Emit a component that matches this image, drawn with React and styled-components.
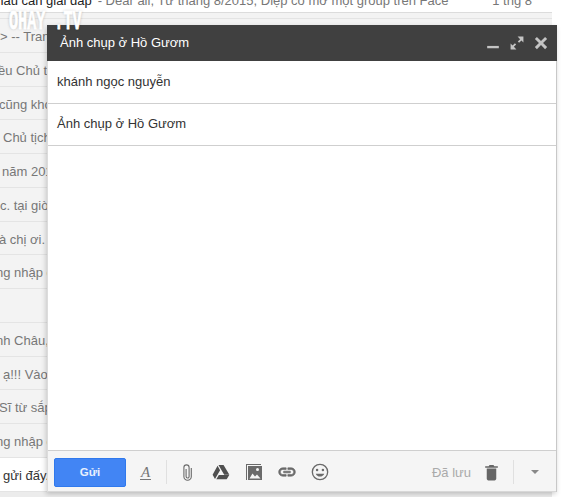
import React from "react";
import styled, { createGlobalStyle } from "styled-components";

const GlobalStyle = createGlobalStyle`
  html, body {
    margin: 0;
    padding: 0;
    background: #fff;
    font-family: "Liberation Sans", Arial, sans-serif;
  }
`;

const Page = styled.div`
  position: relative;
  width: 571px;
  height: 497px;
  overflow: hidden;
  background: #fff;
`;

const MailList = styled.div`
  width: 552px;
  height: 497px;
  overflow: hidden;
  display: flex;
  flex-direction: column;
  background: #ececec;
`;

const TopRow = styled.div`
  height: 19px;
  flex: none;
  box-sizing: border-box;
  background: linear-gradient(#fff 0 12px, #dcdcdc 12px 13px, #f3f3f3 13px);
  border-bottom: 1px solid #e4e4e4;
  overflow: hidden;
`;

const TopText = styled.div`
  display: flex;
  align-items: flex-end;
  height: 9px;
  padding-right: 20px;
  font-size: 13px;
  line-height: 16px;
  white-space: nowrap;
  color: #777;
  overflow: hidden;
`;

const Sender = styled.span`
  color: #222;
  margin-left: -11px;
  margin-right: 6px;
`;

const RowDate = styled.span`
  margin-left: auto;
`;

const Row = styled.div`
  height: 33.75px;
  flex: none;
  box-sizing: border-box;
  overflow: hidden;
  background: ${(p) => (p.$unread ? "#fff" : "#f3f3f3")};
  border-bottom: 1px solid #e4e4e4;
  text-indent: ${(p) => p.$left}px;
  font-size: 13px;
  line-height: 36px;
  white-space: nowrap;
  color: ${(p) => (p.$unread ? "#333" : "#777")};
`;

const Watermark = styled.div`
  position: absolute;
  left: 9px;
  top: 8px;
  font-family: "Liberation Mono", monospace;
  font-weight: bold;
  font-size: 27px;
  line-height: 28px;
  white-space: pre;
  color: #fff;
  -webkit-text-stroke: 0.8px #fff;
  text-shadow: 0 0 4px rgba(0, 0, 0, 0.28);
  transform: scaleX(0.56);
  transform-origin: left top;
`;

const Compose = styled.section`
  position: absolute;
  left: 47px;
  top: 25px;
  width: 510px;
  height: 467px;
  box-sizing: border-box;
  display: flex;
  flex-direction: column;
  background: #fff;
  border-left: 1px solid #dcdcdc;
  border-right: 1px solid #c8c8c8;
  box-shadow: -1px 2px 5px rgba(0, 0, 0, 0.2);
`;

const Header = styled.header`
  height: 36px;
  flex: none;
  display: flex;
  align-items: center;
  padding: 0 9px 0 13px;
  margin: 0 -1px;
  background: #404040;
`;

const Title = styled.div`
  flex: 1;
  padding-bottom: 2px;
  font-size: 13px;
  color: #fff;
`;

const HeaderIcons = styled.div`
  display: flex;
  align-items: center;
  gap: 10px;
  color: #c4c4c4;
`;

const Field = styled.div`
  height: ${(p) => p.$height}px;
  flex: none;
  box-sizing: border-box;
  display: flex;
  align-items: center;
  padding: 0 9px 2px;
  font-size: 13px;
  color: #333;
  border-bottom: 1px solid #cfcfcf;
`;

const Body = styled.div`
  flex: 1;
`;

const Footer = styled.footer`
  height: 42px;
  flex: none;
  box-sizing: border-box;
  display: flex;
  align-items: center;
  padding: 2px 17px 0 6px;
  background: #f5f5f5;
  border-top: 1px solid #cfcfcf;
  border-bottom: 1px solid #d8d8d8;
`;

const SendButton = styled.button`
  width: 72px;
  height: 29px;
  padding: 0;
  box-sizing: border-box;
  border: 1px solid #3079ed;
  border-radius: 2px;
  background: #4285f4;
  color: #e8f0fe;
  font-family: inherit;
  font-size: 11.5px;
  font-weight: bold;
`;

const FormatA = styled.span`
  width: 11px;
  margin-left: 14px;
  font-family: "Liberation Serif", serif;
  font-style: italic;
  font-size: 15px;
  line-height: 14px;
  text-align: center;
  color: #777;
  border-bottom: 1px solid #777;
`;

const Divider = styled.span`
  width: 1px;
  height: 24px;
  background: #e0e0e0;
  margin: ${(p) => p.$margin};
`;

const Tools = styled.div`
  display: grid;
  grid-template-columns: repeat(5, 33.1px);
  justify-items: center;
  align-items: center;
  color: #6a6a6a;
`;

const Trash = styled.div`
  display: flex;
  color: #666;
`;

const Saved = styled.span`
  margin-left: auto;
  margin-right: 11px;
  font-size: 13px;
  color: #aaa;
`;

const Caret = styled.span`
  width: 0;
  height: 0;
  border-left: 4px solid transparent;
  border-right: 4px solid transparent;
  border-top: 4px solid #888;
`;

const Icon = ({ size = 24, box = "0 0 24 24", children, ...rest }) => (
  <svg width={size} height={size} viewBox={box} fill="currentColor" {...rest}>
    {children}
  </svg>
);

const rows = [
  { left: 0, text: "> -- Trang nhất bạn có thể xem thêm" },
  { left: -2, text: "ều Chủ tịch và các bạn học sinh" },
  { left: -1, text: "cũng khó nói lắm với các bạn" },
  { left: 3, text: "Chủ tịch nước đã gửi thư chúc mừng" },
  { left: 2, text: "năm 2015 các bạn đã" },
  { left: 0, text: "c. tại giờ học hôm nay" },
  { left: -1, text: "à chị ơi. em hỏi" },
  { left: -4, text: "ng nhập để xem" },
  { left: 0, text: "" },
  { left: -4, text: "nh Châu, cảm ơn bạn" },
  { left: 3, text: "ạ!!! Vào đây đi nhé" },
  { left: -1, text: "Sĩ từ sắp về đây" },
  { left: -4, text: "ng nhập để xem" },
  { left: 3, text: "gửi đấy. Cảm ơn bạn", unread: true },
];

export default function App() {
  return (
    <>
      <GlobalStyle />
      <Page>
        <MailList>
          <TopRow>
            <TopText>
              <Sender>nhau cần giải đáp</Sender>
              - Dear all, Từ tháng 8/2015, Diệp có mở một group trên Face
              <RowDate>1 thg 8</RowDate>
            </TopText>
          </TopRow>
          {rows.map((r, i) => (
            <Row key={i} $left={r.left} $unread={r.unread}>
              {r.text}
            </Row>
          ))}
        </MailList>

        <Compose>
          <Header>
            <Title>Ảnh chụp ở Hồ Gươm</Title>
            <HeaderIcons>
              <Icon size={14}>
                <rect x="2" y="17" width="20" height="4" />
              </Icon>
              <Icon size={14}>
                <path d="M13 1h10v10l-3.4-3.4-4 4-2.2-2.2 4-4zM11 23H1V13l3.4 3.4 4-4 2.2 2.2-4 4z" />
              </Icon>
              <Icon size={14}>
                <path d="M19 1.5L22.5 5 15.5 12l7 7-3.5 3.5-7-7-7 7L1.5 19l7-7-7-7L5 1.5l7 7z" />
              </Icon>
            </HeaderIcons>
          </Header>

          <Field $height={43}>khánh ngọc nguyễn</Field>
          <Field $height={42}>Ảnh chụp ở Hồ Gươm</Field>
          <Body />

          <Footer>
            <SendButton>Gửi</SendButton>
            <FormatA>A</FormatA>
            <Divider $margin="0 4px 0 15px" />
            <Tools>
              <Icon size={17} box="0 0 10 17">
                <path
                  fill="none"
                  stroke="currentColor"
                  strokeWidth="1.1"
                  d="M3.6 5v7.5a1.5 1.5 0 0 0 3 0V3.5a2.6 2.6 0 0 0-5.2 0v9a3.7 3.7 0 0 0 7.4 0V4"
                />
              </Icon>
              <Icon size={18} color="#505050">
                <path d="M8.6 2.5h6.8l7.8 13.2h-6.9zM7.4 3.5l3.4 6-6.8 11.7L.8 15.8zM5.7 21.5l3.4-5.5H23l-3.4 5.5z" />
              </Icon>
              <Icon size={16} box="0 0 16 16">
                <path d="M0 0h15v1H1v15H0z" />
                <rect x="2" y="2" width="14" height="14" />
                <circle cx="11.5" cy="5.5" r="1.5" fill="#f5f5f5" />
                <path d="M3.5 14.5l3-5 2.5 3 2-2 3.5 4z" fill="#f5f5f5" />
              </Icon>
              <Icon size={20}>
                <path
                  stroke="currentColor"
                  strokeWidth="0.8"
                  d="M3.9 12c0-1.71 1.39-3.1 3.1-3.1h4V7H7c-2.76 0-5 2.24-5 5s2.24 5 5 5h4v-1.9H7c-1.71 0-3.1-1.39-3.1-3.1zM8 13h8v-2H8v2zm9-6h-4v1.9h4c1.71 0 3.1 1.39 3.1 3.1s-1.39 3.1-3.1 3.1h-4V17h4c2.76 0 5-2.24 5-5s-2.24-5-5-5z"
                />
              </Icon>
              <Icon size={20}>
                <path
                  fillRule="evenodd"
                  d="M12 2a10 10 0 1 1 0 20 10 10 0 0 1 0-20zm0 1.6a8.4 8.4 0 1 0 0 16.8 8.4 8.4 0 0 0 0-16.8zM8.5 8a1.5 1.5 0 1 1 0 3 1.5 1.5 0 0 1 0-3zm7 0a1.5 1.5 0 1 1 0 3 1.5 1.5 0 0 1 0-3zM12 17.5c-2.3 0-4.3-1.4-5.1-3.5h10.2c-.8 2.1-2.8 3.5-5.1 3.5z"
                />
              </Icon>
            </Tools>
            <Saved>Đã lưu</Saved>
            <Trash>
              <Icon size={19}>
                <path d="M6 20c0 1.1.9 2 2 2h8c1.1 0 2-.9 2-2V7H6v13zM20 4h-4.5l-1-1.5h-5l-1 1.5H4v2h16V4z" />
              </Icon>
            </Trash>
            <Divider $margin="0 17px 0 12px" />
            <Caret />
          </Footer>
        </Compose>

        <Watermark>OHAY .TV</Watermark>
      </Page>
    </>
  );
}
